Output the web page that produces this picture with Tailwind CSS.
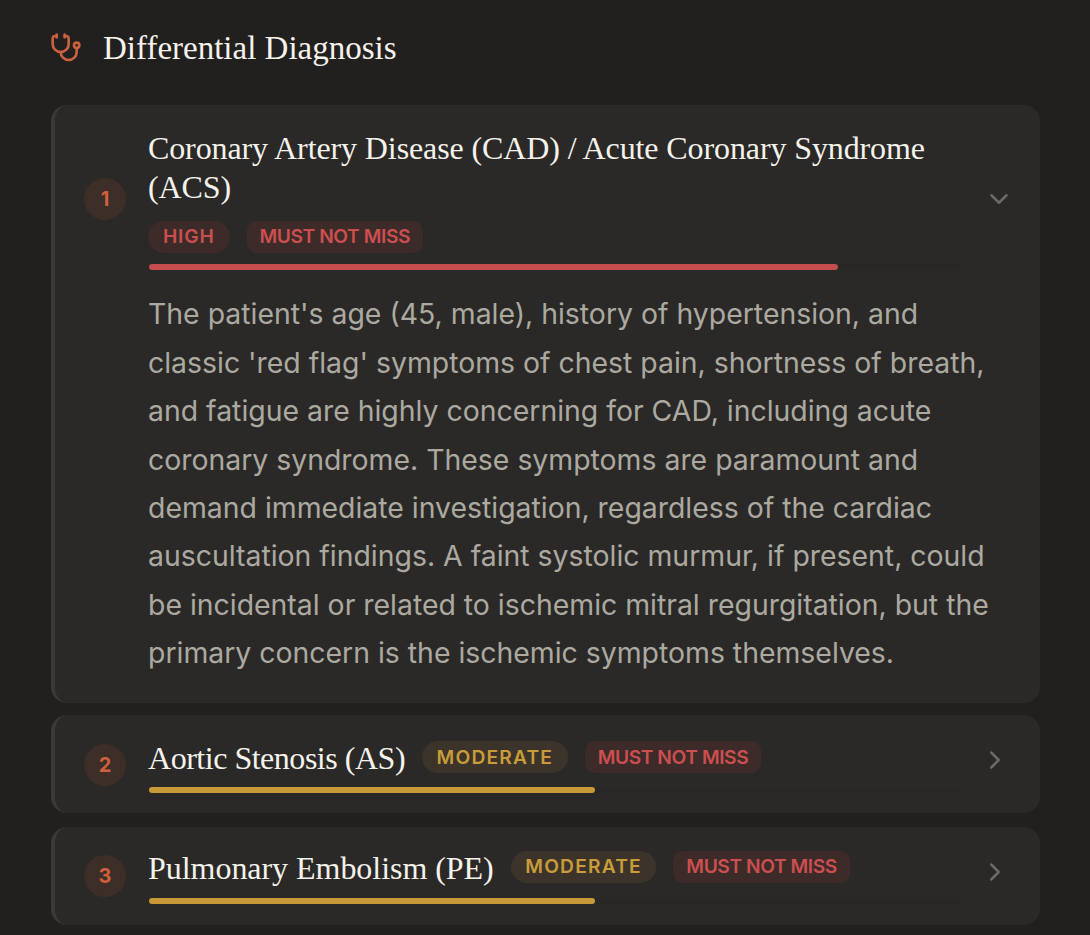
<!DOCTYPE html>
<html lang="en">
<head>
    <meta charset="UTF-8">
    <meta name="viewport" content="width=device-width, initial-scale=1.0">
    <title>Differential Diagnosis</title>
    <script src="https://cdn.jsdelivr.net/npm/@tailwindcss/browser@4"></script>
</head>
<body class="bg-[#22201e] font-['Inter',sans-serif] h-[935px] overflow-hidden">

    <main class="pl-[51px] pr-[50px]">

        <!-- Section title -->
        <div class="flex items-center h-[105px] pb-[10px] gap-[21px]">
            <svg class="-ml-[1px] w-8 h-8 text-[#c8623f]" viewBox="0 0 24 24" fill="none" stroke="currentColor" stroke-width="2" stroke-linecap="round" stroke-linejoin="round">
                <path d="M11 2v2"/><path d="M5 2v2"/><path d="M5 3H4a2 2 0 0 0-2 2v4a6 6 0 0 0 12 0V5a2 2 0 0 0-2-2h-1"/><path d="M8 15a6 6 0 0 0 12 0v-3"/><circle cx="20" cy="10" r="2"/>
            </svg>
            <h2 class="font-['Liberation_Serif',serif] text-[33px] leading-[40px] text-[#f5f2ec]">Differential Diagnosis</h2>
        </div>

        <!-- Card 1, open -->
        <section class="h-[597.6px] bg-[#2a2927] rounded-2xl border-l-[4px] border-[#3b3936]">
            <div class="flex items-center pt-6 pb-5 pl-[29px]">
                <div class="shrink-0 -mt-[1px] w-[42px] h-[42px] rounded-full bg-[#3d2e28] text-[#d0603c] flex items-center justify-center text-xl font-bold">1</div>
                <div class="shrink-0 ml-[22.6px] w-[811px]">
                    <h3 class="-ml-[0.6px] font-['Liberation_Serif',serif] text-[32px] leading-[39px] text-[#f5f2ec] tracking-[-0.11px]">Coronary Artery Disease (CAD) / Acute Coronary Syndrome (ACS)</h3>
                    <div class="-ml-[0.6px] flex gap-[17px] mt-[14px]">
                        <span class="h-8 pb-px px-[15px] rounded-full bg-[#3d2b2a] text-[#cb4f4f] text-[19.2px] font-semibold tracking-[0.8px] flex items-center">HIGH</span>
                        <span class="h-8 pb-px px-[13px] rounded-[10px] bg-[#3d2b2a] text-[#cb4f4f] text-[19.2px] font-semibold tracking-[-0.42px] flex items-center">MUST NOT MISS</span>
                    </div>
                    <div class="h-[6px] rounded-full bg-[#282725] mt-[11px]">
                        <div class="h-full w-[85%] rounded-full bg-[#c44d4d]"></div>
                    </div>
                </div>
                <svg class="shrink-0 ml-[24px] -mt-[1px] w-[30px] h-[30px] text-[#6b6962]" viewBox="0 0 24 24" fill="none" stroke="currentColor" stroke-width="2" stroke-linecap="round" stroke-linejoin="round">
                    <path d="m6 9 6 6 6-6"/>
                </svg>
            </div>
            <p class="pt-[0.2px] pl-[93px] pr-[48px] text-[28.4px] leading-[48.45px] text-[#aca9a1]">The patient's age (45, male), history of hypertension, and classic 'red flag' symptoms of chest pain, shortness of breath, and fatigue are highly concerning for CAD, including acute coronary syndrome. These symptoms are paramount and demand immediate investigation, regardless of the cardiac auscultation findings. A faint systolic murmur, if present, could be incidental or related to ischemic mitral regurgitation, but the primary concern is the ischemic symptoms themselves.</p>
        </section>

        <!-- Card 2 -->
        <section class="h-[98px] mt-[12.8px] bg-[#2a2927] rounded-2xl border-l-[4px] border-[#3b3936] flex items-center pt-6 pb-5 pl-[29px]">
            <div class="shrink-0 -mt-[2px] w-[42px] h-[42px] rounded-full bg-[#3d2e28] text-[#d0603c] flex items-center justify-center text-xl font-bold">2</div>
            <div class="shrink-0 ml-[22.6px] w-[811px]">
                <div class="-ml-[0.6px] flex items-start gap-[17px] h-[39px]">
                    <h3 class="-mt-[1px] font-['Liberation_Serif',serif] text-[32px] leading-[39px] text-[#f5f2ec] tracking-[-0.48px]">Aortic Stenosis (AS)</h3>
                    <span class="mt-[1.6px] h-8 pb-px px-[14.5px] rounded-full bg-[#3c342a] text-[#c99c3a] text-[19.2px] font-semibold tracking-[1.2px] flex items-center">MODERATE</span>
                    <span class="mt-[1.6px] h-8 pb-px px-[13px] rounded-[10px] bg-[#3d2b2a] text-[#cb4f4f] text-[19.2px] font-semibold tracking-[-0.42px] flex items-center">MUST NOT MISS</span>
                </div>
                <div class="h-[6px] rounded-full bg-[#282725] mt-[8px]">
                    <div class="h-full w-[55%] rounded-full bg-[#c79a37]"></div>
                </div>
            </div>
            <svg class="shrink-0 ml-[20px] -mt-[12px] w-[30px] h-[30px] text-[#6b6962]" viewBox="0 0 24 24" fill="none" stroke="currentColor" stroke-width="2" stroke-linecap="round" stroke-linejoin="round">
                <path d="m9 18 6-6-6-6"/>
            </svg>
        </section>

        <!-- Card 3 -->
        <section class="h-[98px] mt-[13.4px] bg-[#2a2927] rounded-2xl border-l-[4px] border-[#3b3936] flex items-center pt-6 pb-5 pl-[29px]">
            <div class="shrink-0 -mt-[3px] w-[42px] h-[42px] rounded-full bg-[#3d2e28] text-[#d0603c] flex items-center justify-center text-xl font-bold">3</div>
            <div class="shrink-0 ml-[22.6px] w-[811px]">
                <div class="-ml-[0.6px] flex items-start gap-[17px] h-[39px]">
                    <h3 class="-mt-[2px] font-['Liberation_Serif',serif] text-[32px] leading-[39px] text-[#f5f2ec] tracking-[-0.04px]">Pulmonary Embolism (PE)</h3>
                    <span class="h-8 pb-px px-[14.5px] rounded-full bg-[#3c342a] text-[#c99c3a] text-[19.2px] font-semibold tracking-[1.2px] flex items-center">MODERATE</span>
                    <span class="h-8 pb-px px-[13px] rounded-[10px] bg-[#3d2b2a] text-[#cb4f4f] text-[19.2px] font-semibold tracking-[-0.42px] flex items-center">MUST NOT MISS</span>
                </div>
                <div class="h-[6px] rounded-full bg-[#282725] mt-[8px]">
                    <div class="h-full w-[55%] rounded-full bg-[#c79a37]"></div>
                </div>
            </div>
            <svg class="shrink-0 ml-[20px] -mt-[11px] w-[30px] h-[30px] text-[#6b6962]" viewBox="0 0 24 24" fill="none" stroke="currentColor" stroke-width="2" stroke-linecap="round" stroke-linejoin="round">
                <path d="m9 18 6-6-6-6"/>
            </svg>
        </section>

    </main>

</body>
</html>
